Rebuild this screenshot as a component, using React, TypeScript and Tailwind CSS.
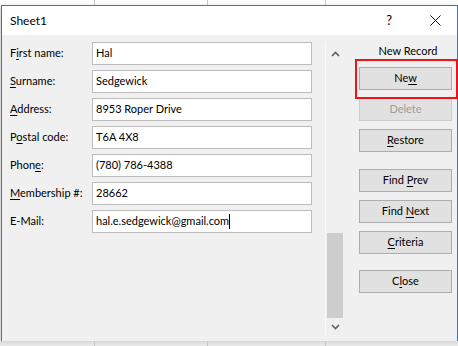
import React from 'react';

const fields = [
  { label: 'First name:', u: 1, value: 'Hal' },
  { label: 'Surname:', u: 0, value: 'Sedgewick' },
  { label: 'Address:', u: 0, value: '8953 Roper Drive' },
  { label: 'Postal code:', u: 1, value: 'T6A 4X8' },
  { label: 'Phone:', u: 4, value: '(780) 786-4388' },
  { label: 'Membership #:', u: 0, value: '28662' },
  { label: 'E-Mail:', u: -1, value: 'hal.e.sedgewick@gmail.com', caret: true },
];

// underline the access-key letter
function Mnemonic({ text, u }: { text: string; u: number }) {
  if (u < 0) return <>{text}</>;
  return (
    <>
      {text.slice(0, u)}
      <span className="underline underline-offset-2 decoration-1">{text[u]}</span>
      {text.slice(u + 1)}
    </>
  );
}

function Btn({ text, u, disabled, className = '' }: { text: string; u: number; disabled?: boolean; className?: string }) {
  return (
    <div
      className={`ml-[4px] w-[93px] h-[23px] flex items-center justify-center border bg-[#e1e1e1] ${
        disabled ? 'border-[#cccccc] text-[#9d9d9d]' : 'border-[#adadad] text-black'
      } ${className}`}
    >
      <span>
        <Mnemonic text={text} u={u} />
      </span>
    </div>
  );
}

function GridStrip({ className }: { className: string }) {
  return (
    <div className={`flex ${className}`}>
      <div className="w-[95px] border-r border-[#c6c6c6]" />
      <div className="w-[113px] border-r border-[#c6c6c6]" />
      <div className="w-[118px] border-r border-[#c6c6c6]" />
      <div className="flex-1" />
    </div>
  );
}

export default function App() {
  return (
    <div className="w-[458px] h-[346px] overflow-hidden bg-[#f4f4f4] font-['Lato',sans-serif] text-[11px] text-black">
      <GridStrip className="h-[5px] bg-white" />

      <div className="ml-[1px] w-[457px] h-[336px] flex flex-col border-l border-t border-r border-[#2b79cf] bg-[#f0f0f0] shadow-[0_2px_5px_rgba(0,0,0,0.25)]">
        {/* title bar */}
        <div className="h-[29px] bg-white flex items-center pl-[8px] shrink-0">
          <span className="text-[12px] text-black">Sheet1</span>
          <span className="ml-auto mr-[38px] text-[13px]">?</span>
          <svg width="11" height="11" viewBox="0 0 11 11" className="mr-[16px]">
            <path d="M0.5 0.5 L10.5 10.5 M10.5 0.5 L0.5 10.5" stroke="#111" strokeWidth="1" />
          </svg>
        </div>

        {/* body */}
        <div className="flex flex-1">
          <div className="pl-[8px] pt-[7px] w-[323px] shrink-0">
            {fields.map((f) => (
              <div key={f.label} className="flex items-center h-[23px] mb-[5px]">
                <div className="w-[82px] shrink-0">
                  <Mnemonic text={f.label} u={f.u} />
                </div>
                <div className="w-[220px] h-[23px] bg-white border border-[#bdbdbd] flex items-center pl-[3px]">
                  {f.value}
                  {f.caret && <span className="inline-block w-px h-[15px] bg-black" />}
                </div>
              </div>
            ))}
          </div>

          {/* scrollbar */}
          <div className="mt-[7px] w-[19px] h-[293px] flex flex-col border-l border-[#fafafa] bg-[#f0f0f0] shrink-0">
            <div className="h-[24px] flex items-center justify-center">
              <svg width="9" height="6" viewBox="0 0 9 6">
                <path d="M1 5 L4.5 1.5 L8 5" stroke="#606060" strokeWidth="1.6" fill="none" />
              </svg>
            </div>
            <div className="flex-1 flex flex-col justify-end">
              <div className="h-[85px] mx-px bg-[#cdcdcd]" />
            </div>
            <div className="h-[17px] flex items-center justify-center">
              <svg width="9" height="6" viewBox="0 0 9 6">
                <path d="M1 1 L4.5 4.5 L8 1" stroke="#606060" strokeWidth="1.6" fill="none" />
              </svg>
            </div>
          </div>

          {/* command buttons */}
          <div className="ml-[11px] flex-1 pt-[8px]">
            <div className="h-[16px] leading-[16px] text-center pl-[4px] mb-[8px]">New Record</div>
            <div className="relative">
              <Btn text="New" u={2} />
              <div className="absolute -top-[8px] -bottom-[9px] left-0 -right-[1px] border-2 border-[#e8151b]" />
            </div>
            <Btn text="Delete" u={-1} disabled className="mt-[8px]" />
            <Btn text="Restore" u={0} className="mt-[8px]" />
            <Btn text="Find Prev" u={5} className="mt-[17px]" />
            <Btn text="Find Next" u={5} className="mt-[8px]" />
            <Btn text="Criteria" u={0} className="mt-[8px]" />
            <Btn text="Close" u={1} className="mt-[16px]" />
          </div>
        </div>
      </div>

      <GridStrip className="h-[5px] bg-gradient-to-b from-[#d6d6d6] to-[#ececec]" />
    </div>
  );
}
